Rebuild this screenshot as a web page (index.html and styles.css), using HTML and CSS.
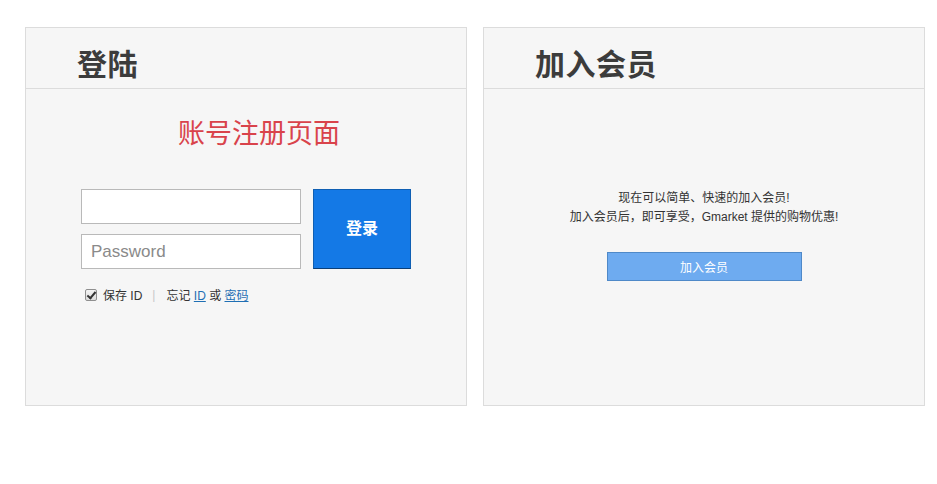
FILE: index.html
```html
<!DOCTYPE html>
<html lang="zh">
<head>
<meta charset="utf-8">
<title>登陆</title>
<link rel="stylesheet" href="styles.css">
</head>
<body>
<div class="wrap">
  <section class="panel">
    <h2 class="panel-head">登陆</h2>
    <div class="panel-body login">
      <h1 class="reg-title">账号注册页面</h1>
      <form class="login-form">
        <div class="fields">
          <input class="field" type="text">
          <input class="field" type="password" placeholder="Password">
        </div>
        <button class="login-btn" type="button">登录</button>
      </form>
      <div class="opts">
        <label class="save"><input class="chk" type="checkbox" checked> 保存 ID</label>
        <span class="sep">|</span>
        <span class="forgot">忘记 <a href="#">ID</a> 或 <a href="#">密码</a></span>
      </div>
    </div>
  </section>
  <section class="panel">
    <h2 class="panel-head">加入会员</h2>
    <div class="panel-body join">
      <p class="join-text">现在可以简单、快速的加入会员!<br>加入会员后，即可享受，Gmarket 提供的购物优惠!</p>
      <button class="join-btn" type="button">加入会员</button>
    </div>
  </section>
</div>
</body>
</html>
```
FILE: styles.css
```css
html, body {
  margin: 0;
  padding: 0;
  background: #fff;
  font-family: "Liberation Sans", "Noto Sans CJK SC", sans-serif;
  color: #333;
}
.wrap {
  display: flex;
  gap: 16px;
  padding: 27px 0 0 25px;
}
.panel {
  width: 440px;
  height: 377px;
  background: #f6f6f6;
  border: 1px solid #dcdcdc;
  display: flex;
  flex-direction: column;
}
.panel-head {
  margin: 0;
  box-sizing: border-box;
  height: 61px;
  border-bottom: 1px solid #dcdcdc;
  padding-left: 51px;
  font-family: "Noto Sans CJK SC", sans-serif;
  font-size: 30px;
  font-weight: bold;
  color: #3c3c3c;
  line-height: 68px;
  letter-spacing: 0.5px;
}
.panel-body {
  flex: 1;
}
.reg-title {
  margin: 24px 0 0 26px;
  text-align: center;
  font-family: "Noto Sans CJK SC", sans-serif;
  font-weight: normal;
  font-size: 27px;
  line-height: 38px;
  color: #d9434b;
}
.login-form {
  display: flex;
  gap: 12px;
  margin: 38px 0 0 55px;
}
.fields {
  display: flex;
  flex-direction: column;
  gap: 10px;
}
.field {
  width: 220px;
  height: 35px;
  box-sizing: border-box;
  margin: 0;
  border: 1px solid #b9b9b9;
  background: #fff;
  padding: 0 9px;
  font-family: "Liberation Sans", sans-serif;
  font-size: 17px;
  color: #333;
}
.field::placeholder {
  color: #8a8a8a;
}
.login-btn {
  width: 98px;
  height: 80px;
  margin: 0;
  background: #1479e6;
  border: 1px solid #0f5fb3;
  border-bottom-color: #0b3f78;
  color: #fff;
  font-family: "Noto Sans CJK SC", sans-serif;
  font-size: 16px;
  font-weight: bold;
  padding: 0 0 4px 0;
}
.opts {
  display: flex;
  align-items: center;
  margin: 17px 0 0 59px;
  font-family: "Liberation Sans", "Noto Sans CJK SC", sans-serif;
  font-size: 12px;
  color: #333;
}
.save {
  display: flex;
  align-items: center;
  gap: 3px;
}
.chk {
  appearance: none;
  -webkit-appearance: none;
  position: relative;
  margin: 0 3px 0 0;
  width: 12px;
  height: 12px;
  border: 1px solid #8f8f8f;
  border-radius: 2px;
  background: linear-gradient(#f4f4f4, #dcdcdc);
}
.chk:checked::after {
  content: "";
  position: absolute;
  left: 3px;
  top: 0px;
  width: 3px;
  height: 7px;
  border: solid #333;
  border-width: 0 2px 2px 0;
  transform: rotate(40deg);
}
.sep {
  color: #c8c8c8;
  margin: 0 11px 0 10px;
}
.forgot a {
  color: #1f6fb4;
  text-decoration: underline;
}
.join {
  display: flex;
  flex-direction: column;
  align-items: center;
}
.join-text {
  margin: 100px 0 0 0;
  text-align: center;
  font-size: 12px;
  line-height: 19px;
  color: #333;
}
.join-btn {
  margin-top: 25px;
  width: 195px;
  height: 29px;
  background: #6eabf0;
  border: 1px solid #4f89c8;
  color: #fff;
  font-family: "Liberation Sans", "Noto Sans CJK SC", sans-serif;
  font-size: 12px;
  padding: 0;
}
```
